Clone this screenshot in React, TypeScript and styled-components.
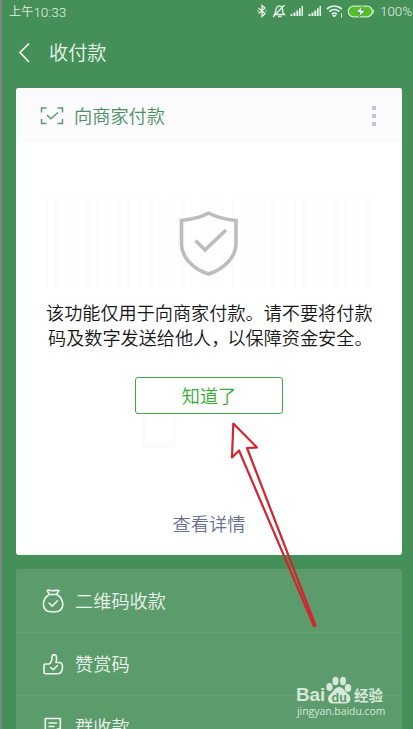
import React from "react";
import styled, { createGlobalStyle } from "styled-components";

const Global = createGlobalStyle`
  * { box-sizing: border-box; }
  html, body { margin: 0; padding: 0; }
  body {
    width: 413px; height: 729px; overflow: hidden; background: #458f58;
    font-family: Roboto, "Noto Sans CJK SC", sans-serif;
  }
`;

const Screen = styled.div`
  position: relative;
  display: flex; flex-direction: column;
  width: 413px; height: 729px; overflow: hidden;
  padding: 0 11px 0 14px;
  border-left: 2px solid #7d8580;
  background: #458f58;
`;

const StatusBar = styled.header`
  display: flex; align-items: center; justify-content: space-between;
  height: 24px; flex: none;
  margin: 0 -11px 0 -7px;
  color: #e3f2e4; white-space: nowrap;
`;
const Clock = styled.span`
  display: flex; align-items: center;
  font-size: 12.2px; line-height: 22px; font-weight: 350;
`;
const Time = styled.span`
  font-family: Roboto, sans-serif; font-size: 13.5px; font-weight: 350;
`;
const StatusIcons = styled.div`
  display: flex; align-items: center; height: 22px; margin-bottom: 2px;
`;
const Percent = styled.span`
  width: 33px; margin-left: 5px; line-height: 22px; padding-top: 1px;
  font-family: Roboto, sans-serif; font-size: 13.4px; font-weight: 350;
`;
const BluetoothIcon = styled.svg`
  margin-right: 4px;
`;

const TitleBar = styled.div`
  display: flex; align-items: center; flex: none;
  height: 64px; padding: 0 0 6px 2px;
  color: #e9f6ea;
`;
const Title = styled.h1`
  margin: 2px 0 0 17px; font-size: 19.2px; line-height: 28px; font-weight: 350;
`;

const Card = styled.section`
  display: flex; flex-direction: column; flex: none;
  height: 467px; border-radius: 3px; overflow: hidden; background: #fff;
`;
const CardHeader = styled.div`
  display: flex; align-items: center; flex: none;
  height: 55px; padding: 0 26px 0 24px;
  background: #fbfafc; color: #4c8f61;
`;
const CardTitle = styled.h2`
  flex: 1; margin: 2px 0 0 10px;
  font-size: 18.2px; line-height: 28px; font-weight: 350;
`;
const More = styled.div`
  display: grid; gap: 4px;
`;
const Dot = styled.i`
  width: 4px; height: 4px; background: #c6c6ca;
`;
const CardBody = styled.div`
  display: flex; flex-direction: column; align-items: center;
  padding-top: 54px;
`;
const Barcode = styled.div`
  display: flex; align-items: center; justify-content: center;
  width: 326px; height: 91px; margin-bottom: 12px;
  background: repeating-linear-gradient(90deg, #fcfbfd 0 2px, #fff 2px 8px, #fdfcfe 8px 15px, #fff 15px 19px, #fdfcfe 19px 22px, #fff 22px 31px);
`;
const Notice = styled.p`
  width: 330px; margin: 0; color: #161616;
  font-family: "Noto Sans CJK SC", sans-serif;
  font-size: 18.15px; line-height: 25px; font-weight: 350; white-space: nowrap;
`;
const NoticeLine = styled.span<{ $indent?: number }>`
  display: flex; padding-left: ${(p) => p.$indent ?? 0}px;
`;
const Clause = styled.span<{ $tight?: boolean }>`
  margin-right: ${(p) => (p.$tight ? "-2px" : 0)};
`;
const Confirm = styled.button`
  width: 148px; height: 37px; margin: 27px 0 0; padding: 0 0 2px;
  border: 1.5px solid #3fa83f; border-radius: 3px; background: #fff;
  color: #35ad35; font: 350 18.2px/32px "Noto Sans CJK SC", sans-serif;
`;
const QrTrace = styled.div`
  display: flex; width: 134px; height: 34px;
`;
const QrCorner = styled.i`
  width: 34px; height: 34px; border: 5px solid #fcfbfe; border-top-width: 3px;
`;
const Details = styled.a`
  margin-top: 63px; color: #667094;
  font-size: 18.2px; line-height: 28px; font-weight: 350;
`;

const List = styled.nav`
  flex: none; margin-top: 14px; border-radius: 3px 3px 0 0;
  background: #5c9b6c;
`;
const Row = styled.div`
  display: flex; align-items: center;
  height: 63px; padding-left: 25px;
  border-bottom: 1px solid #66a175;
  color: #eaf5eb; font-size: 18.2px; font-weight: 350; line-height: 28px;
  &:first-child { height: 64px; }
`;
const RowLabel = styled.span`
  margin: 2px 0 0 10px;
`;

const Pointer = styled.svg`
  position: absolute; left: 221px; top: 415px; pointer-events: none;
`;
const Watermark = styled.div`
  position: absolute; left: 294px; top: 675px; width: 92px; height: 42px;
  color: #d6e8d9;
`;
const Brand = styled.div`
  display: flex; align-items: flex-end; height: 29px;
  white-space: nowrap;
`;
const Bai = styled.span`
  width: 29px; font: 700 18.8px/18px "Liberation Sans", sans-serif;
`;
const Experience = styled.span`
  margin-left: 1px; font: 700 14.5px/18px "Noto Sans CJK SC", sans-serif;
`;
const Site = styled.div`
  margin-left: 1px; white-space: nowrap;
  font: 500 10.4px/14px "Open Sans", sans-serif;
`;

const Signal = () => (
  <svg width="18" height="12" viewBox="0 0 18 12" fill="#e3f2e4">
    <path d="M.5 9h2v2h-2zM3.500 7.500h2V11h-2zM6.300 5.500h2V11h-2zM9 3.200h1.700V11H9zM11.500 1H13v10h-1.500z" />
  </svg>
);

const ICON_LINE = {
  fill: "none", stroke: "#edf8ee", strokeWidth: 1.6,
  strokeLinecap: "round", strokeLinejoin: "round",
} as const;

const BagIcon = () => (
  <svg width="24" height="26" viewBox="0 0 24 26" {...ICON_LINE}>
    <path d="M8.200 6.500C5 8.400 2.400 12.600 2.400 16.500c0 5.200 3.700 7.500 9.700 7.500s9.700-2.300 9.700-7.500c0-4-2.600-8-6-10z" />
    <path d="M8.200 6.200 6.300 2.600c2-1.500 3.500.4 5.600.2 2-.2 3.600-.7 6-.2l-2.300 3.700" />
    <path d="m8 15 3.200 3.100 5.300-5.300" />
  </svg>
);
const ThumbIcon = () => (
  <svg width="24" height="24" viewBox="0 0 24 24" {...ICON_LINE}>
    <path d="M4.500 12H8c2-.8 3-4.200 3.100-7.200.1-2.900 3.800-2.900 4.300-.3.400 2 .2 4-.3 6H18c2.500 0 3.500 1.400 3.500 4 0 4.600-2 7.300-5 7.300H4.500c-1 0-1.500-.5-1.500-1.500v-6.800c0-1 .5-1.500 1.500-1.500z" />
    <path d="m9.500 15.500 2.700 2.200 4.300-4.200" />
  </svg>
);
const BillIcon = () => (
  <svg width="24" height="24" viewBox="0 0 24 24" {...ICON_LINE}>
    <path d="M4.300 3.500h15v18h-15zM8 8h7.500M8 11.500h5" />
    <path d="m14.500 17 2-3h2.800" />
  </svg>
);

export default function App() {
  return (
    <>
      <Global />
      <Screen>
        <StatusBar>
          <Clock>上午<Time>10:33</Time></Clock>
          <StatusIcons>
            <BluetoothIcon width="10" height="14" viewBox="0 0 10 14" fill="none" stroke="#e3f2e4" strokeWidth="1.300">
              <path d="m1.500 4 6.500 5.500L5 12.500v-11L8 4 1.500 9.500M.3 6.800h1.200m7 0h1.200" />
            </BluetoothIcon>
            <svg width="16" height="14" viewBox="0 0 16 14" fill="none" stroke="#e3f2e4" strokeWidth="1.300">
              <path d="M3.500 10.500C5 9 4.200 4 6.500 2.500c2-1.300 5 0 5 2.500 0 3 .3 4.300 1.800 5.500zM7 12.500h3.500M13.500 1 2 13" />
            </svg>
            <svg width="3" height="1" />
            <Signal />
            <Signal />
            <svg width="20" height="14" viewBox="0 0 20 14" fill="none" stroke="#e3f2e4" strokeWidth="1.700">
              <path d="M.8 5c4.400-4 10.600-4 15 0M3.300 7.700c3-2.700 7-2.700 10 0M5.800 10.200c1.600-1.400 3.400-1.400 5 0" />
              <path d="m6.800 11.500 1.500 1.500 1.500-1.500zM15.500 9.500v4" strokeWidth="1" fill="#e3f2e4" />
            </svg>
            <svg width="29" height="13" viewBox="0 0 29 13">
              <rect x="2.300" y="1.200" width="24" height="10.600" rx="5.200" fill="#55bd25" stroke="#cfecc9" strokeWidth="1.300" />
              <path d="M27.200 4.500v4" stroke="#cfecc9" strokeWidth="1.200" />
              <path d="m16.500.8-6.500 6.500h4l-1.300 5 6.800-7h-4.300z" fill="#effbe9" stroke="#458f58" strokeWidth=".8" />
            </svg>
            <Percent>100%</Percent>
          </StatusIcons>
        </StatusBar>
        <TitleBar>
          <svg width="14" height="22" viewBox="0 0 14 22" fill="none" stroke="#edf8ee" strokeWidth="1.700">
            <path d="m11 1.500-9 9 9 9.500" />
          </svg>
          <Title>收付款</Title>
        </TitleBar>

        <Card>
          <CardHeader>
            <svg width="24" height="20" viewBox="0 0 24 20" fill="none" stroke="#5b9b6e" strokeWidth="1.500">
              <path d="M6.500 2h-5v4.500M17.500 2h5v4.500M1.500 13v4.500h5M22.500 13v4.500h-5M7 9l3.800 3.800L18 6.500" />
            </svg>
            <CardTitle>向商家付款</CardTitle>
            <More><Dot /><Dot /><Dot /></More>
          </CardHeader>
          <CardBody>
            <Barcode>
              <svg width="62" height="68" viewBox="0 0 62 68" fill="none" stroke="#bdbdbf" strokeWidth="3.600">
                <path d="M30.500 4C23 8.500 13 10.500 3.500 11.500v23c0 14 12 26 27 30.500C45.500 60.500 58 48.500 58 34.500v-23C48 10.500 38.500 8.500 30.500 4z" />
                <path d="m17.500 31.500 9.500 9.500 21-20" />
              </svg>
            </Barcode>
            <Notice>
              <NoticeLine $indent={2}>该功能仅用于向商家付款。请不要将付款</NoticeLine>
              <NoticeLine $indent={4}>
                <Clause $tight>码及数字发送给他人，</Clause>
                <Clause>以保障资金安全。</Clause>
              </NoticeLine>
            </Notice>
            <Confirm>知道了</Confirm>
            <QrTrace><QrCorner /></QrTrace>
            <Details>查看详情</Details>
          </CardBody>
        </Card>

        <List>
          <Row><BagIcon /><RowLabel>二维码收款</RowLabel></Row>
          <Row><ThumbIcon /><RowLabel>赞赏码</RowLabel></Row>
          <Row><BillIcon /><RowLabel>群收款</RowLabel></Row>
        </List>

        <Pointer width="100" height="220" viewBox="0 0 100 220" fill="none" stroke="#d2252d" strokeWidth="2.200" strokeLinejoin="round">
          <path d="M10.300 8.500 34 32.500l-10 .5L92.500 210.500 91 211 16 35.500 9 42.500z" />
        </Pointer>

        <Watermark>
          <Brand>
            <Bai>Bai</Bai>
            <svg width="28" height="28" viewBox="0 0 27 28" fill="#d6e8d9">
              <ellipse cx="4" cy="11" rx="3.200" ry="4" />
              <ellipse cx="10" cy="5" rx="3" ry="4.200" />
              <ellipse cx="17.500" cy="5" rx="3" ry="4.200" />
              <ellipse cx="22.500" cy="12" rx="3.200" ry="4" />
              <path d="M13.500 11c-4 0-5 4-8.500 7-4 3-3 9.500 2 9.500h13c5.500 0 6.500-6.500 2.500-9.500-3.500-3-5-7-9-7z" />
              <text x="6" y="25.500" fill="#5c9b6c" fontFamily="Liberation Sans" fontWeight="700" fontSize="12.500">du</text>
            </svg>
            <Experience>经验</Experience>
          </Brand>
          <Site>jingyan.baidu.com</Site>
        </Watermark>
      </Screen>
    </>
  );
}
